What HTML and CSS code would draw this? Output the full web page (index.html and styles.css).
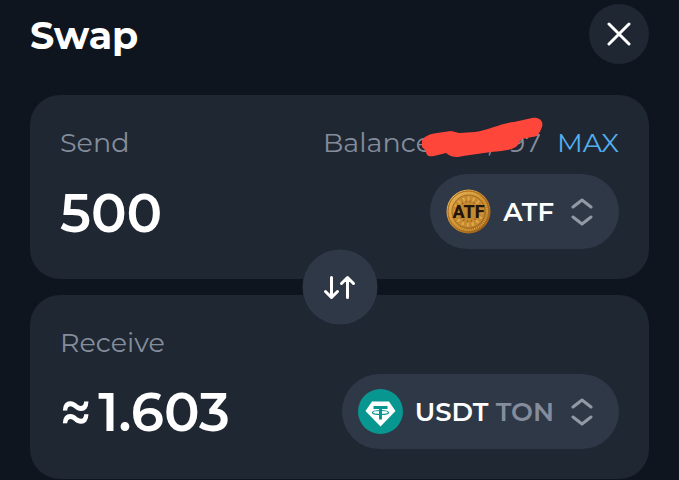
FILE: index.html
```html
<!DOCTYPE html>
<html dir="ltr" lang="en">

<head>
  <meta charset="utf-8">
  <meta name="viewport" content="width=device-width, initial-scale=1.0">
  <title>Swap</title>
  <link rel="stylesheet" href="styles.css">
</head>

<body>
  <header class="header">
    <h1>Swap</h1>
    <button class="close" type="button" aria-label="Close">
      <svg width="24" height="24" viewBox="0 0 24 24">
        <path d="M2 2 22 22M22 2 2 22" />
      </svg>
    </button>
  </header>

  <form class="swap">
    <section class="card">
      <div class="row labels">
        <label for="send">Send</label>
        <div class="balance">
          <span>Balance</span>
          <span class="balance-value"><span>,</span><span>97</span></span>
          <svg class="scribble" viewBox="0 0 122 42" aria-hidden="true">
            <path d="M1 23C3 20 8 17 16 16L30 14 38 16 54 15C68 13 81 6 93 5L111 1C118 0 123 4 121 10C119 15 117 20 111 20L101 22C98 24 98 27 96 29C92 33 82 34 70 35L42 39C34 41 30 40 25 36L13 39C7 40 5 38 5 34L1 30Z" />
          </svg>
        </div>
        <button class="max" type="button">MAX</button>
      </div>
      <div class="row">
        <input class="amount" id="send" type="text" inputmode="decimal" value="500">
        <button class="token" type="button">
          <svg class="token-icon" viewBox="0 0 45 45" aria-hidden="true">
            <defs>
              <linearGradient id="gold" x1="0" y1="0" x2="1" y2="1">
                <stop offset="0" stop-color="#f2c66b" />
                <stop offset=".5" stop-color="#c98a2b" />
                <stop offset="1" stop-color="#8e5414" />
              </linearGradient>
            </defs>
            <circle cx="22.5" cy="22.5" r="22" fill="url(#gold)" />
            <circle cx="22.5" cy="22.5" r="20.5" fill="none" stroke="#a5671c" />
            <circle cx="22.5" cy="22.5" r="18.5" fill="none" stroke="#dca548" stroke-width="2" stroke-dasharray="1 1" />
            <circle cx="22.5" cy="22.5" r="16.5" fill="#c58a30" stroke="#a66d22" />
            <circle cx="22.5" cy="22.5" r="13" fill="none" stroke="#e0a848" stroke-width="4" stroke-dasharray="2 3" />
            <circle cx="22.5" cy="22.5" r="10" fill="none" stroke="#9a5d1b" stroke-width="2" stroke-dasharray="1 3" />
            <text class="coin-text" x="22.5" y="29" text-anchor="middle">ATF</text>
          </svg>
          <span class="token-name">ATF</span>
          <svg class="chevrons" viewBox="0 0 22 28" aria-hidden="true">
            <path d="M2 9 11 2 20 9M2 19 11 26 20 19" />
          </svg>
        </button>
      </div>
    </section>

    <button class="flip" type="button" aria-label="Switch tokens">
      <svg width="32" height="24" viewBox="0 0 32 24">
        <path d="M8 2V22M2 16 8 22 14 16M24 22V2M18 8 24 2 30 8" />
      </svg>
    </button>

    <section class="card">
      <div class="row labels">
        <label for="receive">Receive</label>
      </div>
      <div class="row">
        <output class="amount" id="receive"><span class="approx">≈</span>1.603</output>
        <button class="token" type="button">
          <svg class="token-icon" viewBox="0 0 45 45" aria-hidden="true">
            <circle cx="22.5" cy="22.5" r="22.5" fill="#089691" />
            <path d="M14 12.5H31L37.5 22 22.5 37.5 7.5 22Z" fill="#fff" />
            <path d="M15.5 18.5H29.5M22.5 18.5V30.5" fill="none" stroke="#089691" stroke-width="3" />
            <ellipse cx="22.5" cy="23.5" rx="8" ry="2" fill="none" stroke="#089691" stroke-width="1.2" />
          </svg>
          <span class="token-name">USDT <span class="network">TON</span></span>
          <svg class="chevrons" viewBox="0 0 22 28" aria-hidden="true">
            <path d="M2 9 11 2 20 9M2 19 11 26 20 19" />
          </svg>
        </button>
      </div>
    </section>
  </form>
</body>

</html>
```

FILE: styles.css
```css
:root {
  --bg: #0f151f;
  --card: #1e2732;
  --control: #2f3846;
  --text: #fff;
  --muted: #858d9c;
  --link: #53aeef;
}

* {
  box-sizing: border-box;
}

body {
  margin: 0;
  padding: 4px 30px 0;
  background: var(--bg);
  color: var(--text);
  font-family: Montserrat, Inter, sans-serif;
}

button,
input {
  border: 0;
  padding: 0;
  background: none;
  color: inherit;
  font: inherit;
}

button {
  cursor: pointer;
}

svg {
  display: block;
}

.header {
  display: flex;
  align-items: center;
  justify-content: space-between;
  margin-bottom: 31px;
}

h1 {
  margin: 0;
  padding-top: 4px;
  font-size: 38px;
  font-weight: 700;
  line-height: 56px;
}

.close,
.flip {
  display: flex;
  align-items: center;
  justify-content: center;
  border-radius: 50%;
}

.close {
  width: 60px;
  height: 60px;
  background: var(--card);
}

.close path,
.flip path,
.chevrons path {
  fill: none;
  stroke: currentColor;
  stroke-width: 3;
  stroke-linecap: round;
  stroke-linejoin: round;
}

.swap {
  position: relative;
  display: flex;
  flex-direction: column;
  gap: 16px;
}

.card {
  display: flex;
  flex-direction: column;
  gap: 13px;
  padding: 30px;
  border-radius: 30px;
  background: var(--card);
}

.row {
  display: flex;
  align-items: center;
  justify-content: space-between;
}

.labels {
  gap: 16px;
  color: var(--muted);
  font-size: 27px;
  line-height: 36px;
}

.balance {
  position: relative;
  display: flex;
  margin-left: auto;
}

.balance-value {
  display: flex;
  justify-content: space-between;
  width: 54px;
  margin-left: 55px;
}

/* hides the balance */
.scribble {
  position: absolute;
  top: -8px;
  right: -2px;
  width: 122px;
  fill: #ff463a;
}

.max {
  color: var(--link);
}

.amount {
  flex: 1;
  min-width: 0;
  height: 75px;
  padding-top: 2px;
  font-size: 53px;
  font-weight: 600;
  line-height: 73px;
}

.approx {
  margin-right: 7px;
  font-size: 53px;
}

.token {
  display: flex;
  align-items: center;
  height: 75px;
  padding: 0 26px 0 16px;
  border-radius: 38px;
  background: var(--control);
  font-size: 26px;
  font-weight: 600;
}

.token-icon {
  width: 45px;
  height: 45px;
  margin-right: 12px;
}

.coin-text {
  fill: #25140a;
  font-family: Roboto, sans-serif;
  font-size: 18px;
  font-weight: 800;
}

.network {
  color: var(--muted);
}

.chevrons {
  width: 22px;
  height: 28px;
  margin-left: 17px;
  color: #9298a5;
}

/* sits over the seam between the two cards */
.flip {
  position: absolute;
  top: 50%;
  left: 50%;
  width: 75px;
  height: 75px;
  background: var(--control);
  transform: translate(-50%, -50%);
}
```
